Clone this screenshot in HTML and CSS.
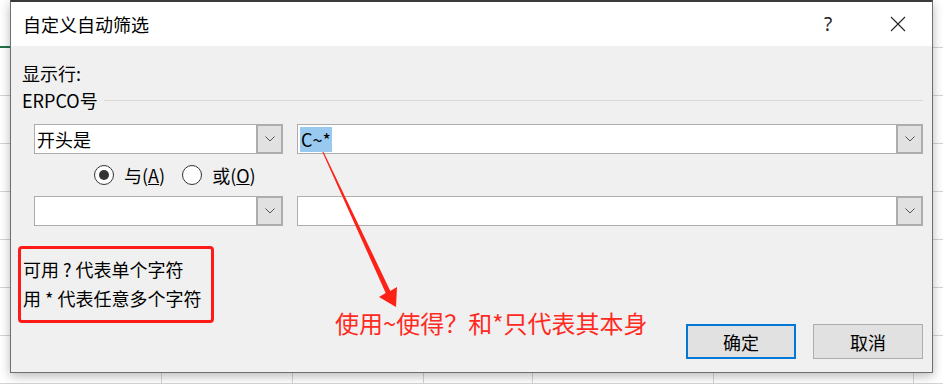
FILE: index.html
```html
<!DOCTYPE html>
<html lang="zh-CN">
  <head>
    <meta charset="UTF-8" />
    <meta name="viewport" content="width=device-width, initial-scale=1.0" />
    <title>自定义自动筛选</title>
    <link rel="stylesheet" href="styles.css">
  </head>
  <body>
    <div class="sheet">
      <!-- Dialog window -->
      <section class="dialog">
        <header class="titlebar">
          <span class="title">自定义自动筛选</span>
          <span class="help">?</span>
          <span class="close">
            <svg width="16" height="16" viewBox="0 0 16 16">
              <path d="M1 1 L15 15 M15 1 L1 15" stroke="#222" stroke-width="1.1" fill="none" />
            </svg>
          </span>
        </header>

        <div class="content">
          <p class="label">显示行:</p>
          <div class="group">
            <span>ERPCO号</span>
            <span class="rule"></span>
          </div>

          <!-- First criteria -->
          <div class="criteria">
            <div class="combo op">
              <span class="value">开头是</span>
              <span class="drop"><svg width="10" height="6" viewBox="0 0 10 6"><path d="M0.5 0.5 L5 5 L9.5 0.5" stroke="#555" fill="none" /></svg></span>
            </div>
            <div class="combo val">
              <span class="value"><span class="selected">C~*</span></span>
              <span class="drop"><svg width="10" height="6" viewBox="0 0 10 6"><path d="M0.5 0.5 L5 5 L9.5 0.5" stroke="#555" fill="none" /></svg></span>
            </div>
          </div>

          <!-- And / Or -->
          <div class="logic">
            <label class="radio"><span class="dot checked"></span>与(<u>A</u>)</label>
            <label class="radio"><span class="dot"></span>或(<u>O</u>)</label>
          </div>

          <!-- Second criteria -->
          <div class="criteria">
            <div class="combo op">
              <span class="value"></span>
              <span class="drop"><svg width="10" height="6" viewBox="0 0 10 6"><path d="M0.5 0.5 L5 5 L9.5 0.5" stroke="#555" fill="none" /></svg></span>
            </div>
            <div class="combo val">
              <span class="value"></span>
              <span class="drop"><svg width="10" height="6" viewBox="0 0 10 6"><path d="M0.5 0.5 L5 5 L9.5 0.5" stroke="#555" fill="none" /></svg></span>
            </div>
          </div>

          <div class="footer">
            <div class="hint">
              <p>可用 ? 代表单个字符</p>
              <p>用 * 代表任意多个字符</p>
            </div>
            <p class="note">使用~使得？和*只代表其本身</p>
            <div class="buttons">
              <button class="btn primary">确定</button>
              <button class="btn">取消</button>
            </div>
          </div>
        </div>
      </section>

      <!-- Annotation arrow -->
      <svg class="arrow" width="943" height="384" viewBox="0 0 943 384">
        <polygon points="322.5,152.3 323.5,151.7 390.3,290.9 397,287 396,307 379,297 385.7,293.1" fill="#fe2116" />
      </svg>
    </div>
  </body>
</html>
```

FILE: styles.css
```css
* {
  box-sizing: border-box;
}

body {
  margin: 0;
  font-family: "Noto Sans CJK SC", "Microsoft YaHei", sans-serif;
  color: #000;
}

p {
  margin: 0;
}

/* Spreadsheet behind the dialog */
.sheet {
  position: relative;
  width: 943px;
  height: 384px;
  overflow: hidden;
  padding: 0 0 0 10px;
  background:
    linear-gradient(#217346, #217346) 0 46px / 10px 2px no-repeat,
    linear-gradient(#d4d4d4, #d4d4d4) 161px 0 / 1px 100% no-repeat,
    linear-gradient(#d4d4d4, #d4d4d4) 292px 0 / 1px 100% no-repeat,
    linear-gradient(#d4d4d4, #d4d4d4) 423px 0 / 1px 100% no-repeat,
    linear-gradient(#d4d4d4, #d4d4d4) 532px 0 / 1px 100% no-repeat,
    linear-gradient(#d4d4d4, #d4d4d4) 713px 0 / 1px 100% no-repeat,
    linear-gradient(#d4d4d4, #d4d4d4) 913px 0 / 1px 100% no-repeat,
    repeating-linear-gradient(to bottom, #fff 0 47px, #d4d4d4 47px 48px);
  background-color: #fff;
}

/* Dialog */
.dialog {
  width: 923px;
  height: 373px;
  background: #f0f0f0;
  border: 1px solid #6f6f6f;
  border-top: 2px solid #3a3a3a;
  box-shadow: 0 3px 10px rgba(0, 0, 0, 0.28);
  display: flex;
  flex-direction: column;
}

.titlebar {
  display: flex;
  align-items: center;
  height: 44px;
  background: #fff;
  padding: 0 0 0 12px;
}

.title {
  font-size: 18px;
  flex: 1;
}

.help {
  font-family: "Noto Sans", sans-serif;
  font-size: 19px;
  color: #222;
  width: 30px;
  text-align: center;
  margin-right: 47px;
}

.close {
  display: inline-flex;
  width: 16px;
  margin-right: 26px;
}

.content {
  flex: 1;
  padding: 15px 9px 0 11px;
  font-size: 18px;
  line-height: 24px;
}

.group {
  display: flex;
  align-items: center;
  margin-top: 3px;
}

.rule {
  flex: 1;
  height: 1px;
  background: #d8d8d8;
  margin-left: 6px;
}

/* Combo boxes */
.criteria {
  display: flex;
  gap: 14px;
  padding-left: 12px;
  margin-top: 12px;
}

.logic + .criteria {
  margin-top: 0;
}

.combo {
  display: flex;
  height: 30px;
  background: #fff;
  border: 1px solid #adadad;
}

.combo.op {
  width: 249px;
}

.combo.val {
  flex: 1;
}

.value {
  flex: 1;
  display: flex;
  align-items: center;
  padding-left: 2px;
}

.selected {
  background: #99c9ef;
  padding: 0 1px 0 1px;
  line-height: 25px;
}

.drop {
  display: flex;
  align-items: center;
  justify-content: center;
  width: 27px;
  margin: -1px -1px -1px 0;
  background: #e1e1e1;
  border: 2px solid #adadad;
}

/* Radio buttons */
.logic {
  display: flex;
  align-items: center;
  height: 42px;
  padding-left: 72px;
}

.radio {
  display: inline-flex;
  align-items: center;
  margin-right: 17px;
}

.dot {
  width: 20px;
  height: 20px;
  border: 1px solid #333;
  border-radius: 50%;
  background: #fff;
  margin-right: 10px;
  display: inline-flex;
  align-items: center;
  justify-content: center;
}

.dot.checked::after {
  content: "";
  width: 10px;
  height: 10px;
  border-radius: 50%;
  background: #333;
}

/* Footer */
.footer {
  display: flex;
  align-items: flex-start;
  margin-top: 20px;
}

.hint {
  width: 196px;
  height: 77px;
  margin-left: -4px;
  padding: 6px 0 0 2px;
  border: 3px solid #ff1a1a;
  border-radius: 4px;
  line-height: 29px;
  white-space: nowrap;
}

.note {
  color: #ff2a1f;
  font-size: 24px;
  line-height: 30px;
  margin: 62px 0 0 121px;
  white-space: nowrap;
}

.buttons {
  display: flex;
  gap: 17px;
  margin: 78px 0 0 auto;
}

.btn {
  width: 110px;
  height: 35px;
  font: inherit;
  font-size: 18px;
  background: #e1e1e1;
  border: 1px solid #adadad;
  padding: 0;
}

.btn.primary {
  border: 2px solid #0078d7;
}

/* Arrow over the dialog */
.arrow {
  position: absolute;
  left: 0;
  top: 0;
  pointer-events: none;
}
```
